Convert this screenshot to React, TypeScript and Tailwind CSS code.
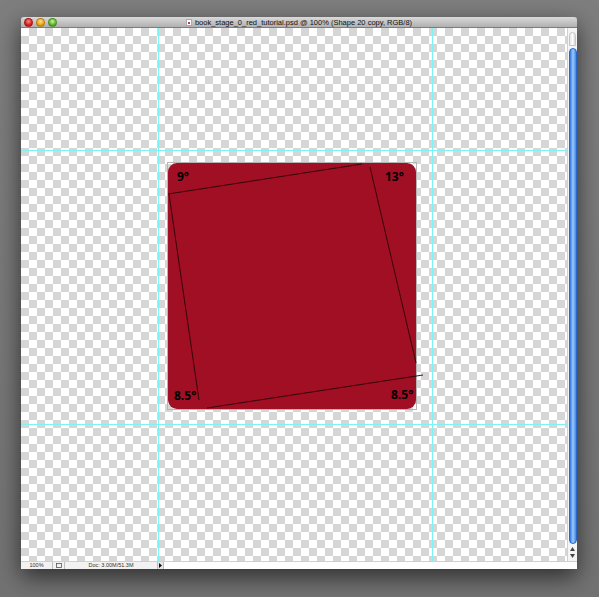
import React from 'react'

const font = { fontFamily: '"Liberation Sans", Arial, sans-serif' }

function TrafficLights() {
  return (
    <div className="flex items-center gap-[3px] pl-[3px]">
      <span className="w-[9px] h-[9px] rounded-full bg-[radial-gradient(circle_at_50%_35%,#ff8a80,#d21f1f_60%,#8a1010)] border border-[#8a1a1a]/60" />
      <span className="w-[9px] h-[9px] rounded-full bg-[radial-gradient(circle_at_50%_35%,#ffe08a,#e9a116_60%,#a0660c)] border border-[#9a6a12]/60" />
      <span className="w-[9px] h-[9px] rounded-full bg-[radial-gradient(circle_at_50%_35%,#c8f59a,#5fb12c_60%,#2f7a14)] border border-[#3b7a1e]/60" />
    </div>
  )
}

function Corner({ label, className }: { label: string; className: string }) {
  return (
    <span
      className={`absolute text-[12px] font-bold leading-none text-black ${className}`}
      style={{ fontFamily: '"Open Sans", "Liberation Sans", sans-serif' }}
    >
      {label}
    </span>
  )
}

function Artwork() {
  return (
    <div className="absolute left-[147px] top-[135px] w-[248px] h-[246px]">
      {/* bounding box of the selected layer */}
      <div className="absolute -inset-px border border-[#b5b5b5]" />
      <div className="absolute inset-0 rounded-[9px] bg-[#a00f24]" />
      <svg
        className="absolute inset-0 overflow-visible"
        width="248"
        height="246"
        viewBox="0 0 248 246"
      >
        <g stroke="#2a0508" strokeWidth="0.9" fill="none">
          <line x1="0" y1="31" x2="194" y2="1" />
          <line x1="1" y1="31" x2="31" y2="237" />
          <line x1="202" y1="4" x2="248" y2="200" />
          <line x1="39" y1="245" x2="255" y2="212" />
        </g>
      </svg>
      <Corner label="9°" className="left-[9px] top-[8px]" />
      <Corner label="13°" className="left-[217px] top-[8px]" />
      <Corner label="8.5°" className="left-[6px] top-[227px]" />
      <Corner label="8.5°" className="left-[223px] top-[226px]" />
    </div>
  )
}

function Canvas() {
  return (
    <div className="relative flex-1 overflow-hidden bg-white bg-[linear-gradient(45deg,#d6d6d6_25%,transparent_25%,transparent_75%,#d6d6d6_75%),linear-gradient(45deg,#d6d6d6_25%,transparent_25%,transparent_75%,#d6d6d6_75%)] bg-[length:16px_16px] bg-[position:0_0,8px_8px]">
      {/* guides */}
      <div className="absolute top-0 bottom-0 left-[137px] w-px bg-[#7ff3f3]" />
      <div className="absolute top-0 bottom-0 left-[411px] w-px bg-[#7ff3f3]" />
      <div className="absolute left-0 right-0 top-[122px] h-px bg-[#7ff3f3]" />
      <div className="absolute left-0 right-0 top-[396px] h-px bg-[#7ff3f3]" />
      <Artwork />
    </div>
  )
}

function Scrollbar() {
  return (
    <div className="w-[10px] flex flex-col bg-[#f4f4f4] border-l border-[#d0d0d0]">
      <div className="h-[20px] flex justify-center pt-[4px]">
        <div className="w-[7px] h-[14px] rounded-t-full bg-gradient-to-r from-[#e6e6e6] via-white to-[#d8d8d8] border border-[#c4c4c4]" />
      </div>
      <div className="flex-1 flex justify-center">
        <div className="w-[8px] h-full rounded-full bg-gradient-to-r from-[#2f76de] via-[#9cc8fb] to-[#3f86e6] border border-[#2a66c8]" />
      </div>
      <div className="h-[17px] flex flex-col items-center justify-center gap-[3px]">
        <svg width="5" height="4" viewBox="0 0 5 4">
          <path d="M2.5 0 L5 4 L0 4 Z" fill="#444" />
        </svg>
        <svg width="5" height="4" viewBox="0 0 5 4">
          <path d="M0 0 L5 0 L2.5 4 Z" fill="#444" />
        </svg>
      </div>
    </div>
  )
}

function StatusBar() {
  return (
    <div className="h-[8px] flex items-stretch bg-[#f2f2f2] border-t border-[#cfcfcf] text-[5.5px] leading-[7px] text-[#333]">
      <div className="w-[32px] flex items-center justify-center border-r border-[#bdbdbd]">100%</div>
      <div className="w-[12px] flex items-center justify-center border-r border-[#bdbdbd]">
        <svg width="6" height="5" viewBox="0 0 6 5">
          <rect x="0.5" y="0.5" width="5" height="4" fill="none" stroke="#555" strokeWidth="0.8" />
        </svg>
      </div>
      <div className="w-[92px] flex items-center justify-center">Doc: 3.00M/51.3M</div>
      <div className="w-[7px] flex items-center justify-center border-x border-[#bdbdbd] bg-[#e6e6e6]">
        <svg width="3" height="5" viewBox="0 0 3 5">
          <path d="M0 0 L3 2.5 L0 5 Z" fill="#111" />
        </svg>
      </div>
      <div className="flex-1 bg-white" />
    </div>
  )
}

export default function App() {
  return (
    <div className="w-[599px] h-[597px] bg-gradient-to-b from-[#7e7e7e] to-[#727272] pt-[17px] pl-[21px]" style={font}>
      <div className="w-[556px] h-[552px] flex flex-col shadow-[0_8px_22px_rgba(0,0,0,0.6)]">
        <div className="h-[11px] relative flex items-center bg-gradient-to-b from-[#dadada] to-[#b0b0b0] border-b border-[#7d7d7d] rounded-t-[3px]">
          <TrafficLights />
          <div className="absolute inset-0 flex items-center justify-center gap-[3px] text-[7.5px] text-[#111] leading-none pt-px">
            <span className="w-[6px] h-[7px] bg-white border border-[#aaa] flex items-center justify-center">
              <span className="w-[2px] h-[2px] bg-[#c0394a]" />
            </span>
            <span>book_stage_0_red_tutorial.psd @ 100% (Shape 20 copy, RGB/8)</span>
          </div>
        </div>
        <div className="flex-1 flex min-h-0">
          <Canvas />
          <Scrollbar />
        </div>
        <StatusBar />
      </div>
    </div>
  )
}
